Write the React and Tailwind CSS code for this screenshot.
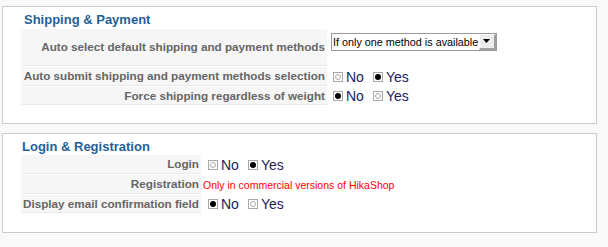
import React from "react";

function Radio({ checked }) {
  return (
    <span className="flex h-[10px] w-[10px] shrink-0 items-center justify-center border border-[#a8a8a8] bg-white">
      {checked ? (
        <span className="h-[6px] w-[6px] rounded-full bg-black" />
      ) : (
        <svg width="6" height="6" viewBox="0 0 6 6">
          <circle cx="3" cy="3" r="2.5" fill="none" stroke="#a8a8a8" strokeWidth="1" />
        </svg>
      )}
    </span>
  );
}

function YesNo({ value, first = 4 }) {
  return (
    <div className="flex items-center text-[14px] leading-[16px] text-[#221a5e]">
      <span className={first === 5 ? "ml-[5px]" : "ml-[4px]"}>
        <Radio checked={value === "no"} />
      </span>
      <span className="ml-[3px]">No</span>
      <span className="ml-[9px]">
        <Radio checked={value === "yes"} />
      </span>
      <span className="ml-[3px]">Yes</span>
    </div>
  );
}

function Label({ children, className = "" }) {
  return (
    <div
      className={
        "flex items-center justify-end whitespace-nowrap border-b border-[#e9e9e9] bg-[#f6f6f6] pr-[2px] text-[11.7px] font-bold leading-[14px] text-[#666] " +
        className
      }
    >
      {children}
    </div>
  );
}

function FakeSelect() {
  return (
    <div className="ml-[2px] mt-[4px] flex h-[18px] w-[166px] border border-[#9a9a9a] bg-white">
      <div className="flex min-w-0 flex-1 items-center overflow-hidden whitespace-nowrap pl-[1px] text-[10.8px] leading-[14px] text-black">
        If only one method is available
      </div>
      <div className="flex w-[17px] shrink-0 items-center justify-center border-b-2 border-l border-r-2 border-t border-b-[#a0a0a0] border-l-white border-r-[#a0a0a0] border-t-white bg-[#ececec]">
        <svg width="8" height="5" viewBox="0 0 8 5">
          <path d="M0 0 H7 L3.5 4 Z" fill="#000" />
        </svg>
      </div>
    </div>
  );
}

export default function App() {
  return (
    <div className="min-h-[247px] w-[608px] bg-[#f9f9f9] pl-[2px] pt-[6px] font-['Liberation_Sans',Arial,sans-serif]">
      <div className="w-[595px] border border-[#cccccc] bg-white pb-[18px]">
        <div className="mt-[5px] pl-[21px] text-[13px] font-bold leading-[16px] text-[#1f5f99]">
          Shipping &amp; Payment
        </div>
        <div className="ml-[18px] mt-[1px] grid grid-cols-[306px_1fr] gap-x-[1px] gap-y-[1px]">
          <Label className="h-[37px]">Auto select default shipping and payment methods</Label>
          <div className="flex items-start pl-[1px]">
            <FakeSelect />
          </div>
          <Label className="h-[19px]">Auto submit shipping and payment methods selection</Label>
          <div className="flex items-center pl-[1px]">
            <YesNo value="yes" />
          </div>
          <Label className="h-[18px]">Force shipping regardless of weight</Label>
          <div className="flex items-center pl-[1px]">
            <YesNo value="no" />
          </div>
        </div>
      </div>

      <div className="mt-[9px] w-[595px] border border-[#cccccc] bg-white pb-[19px]">
        <div className="mt-[5px] pl-[19px] text-[13px] font-bold leading-[16px] text-[#1f5f99]">
          Login &amp; Registration
        </div>
        <div className="ml-[18px] grid grid-cols-[180px_1fr] gap-x-[1px] gap-y-[1px]">
          <Label className="h-[19px]">Login</Label>
          <div className="flex items-center pl-[1px]">
            <YesNo value="yes" first={5} />
          </div>
          <Label className="h-[19px]">Registration</Label>
          <div className="flex items-center pl-[1px] text-[10.5px] leading-[14px] text-[#ff0000]">
            Only in commercial versions of HikaShop
          </div>
          <Label className="h-[18px]">Display email confirmation field</Label>
          <div className="flex items-center pl-[1px]">
            <YesNo value="no" first={5} />
          </div>
        </div>
      </div>
    </div>
  );
}
